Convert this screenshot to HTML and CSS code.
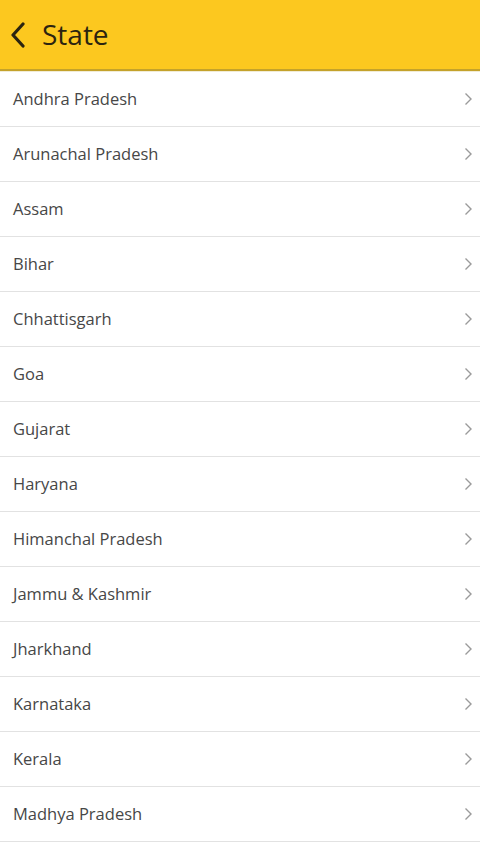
FILE: index.html
```html
<!DOCTYPE html>
<html lang="en">
<head>
<meta charset="utf-8">
<title>State</title>
<link rel="stylesheet" href="styles.css">
</head>
<body>
<header class="appbar">
  <button class="back" aria-label="Back">
    <svg width="18" height="26" viewBox="0 0 18 26"><path d="M14 2 L4 13 L14 24" fill="none" stroke="#2b2410" stroke-width="3.2" stroke-linecap="round" stroke-linejoin="round"/></svg>
  </button>
  <h1 class="title">State</h1>
</header>
<ul class="list">
  <li class="item"><span class="name">Andhra Pradesh</span><svg class="chev" width="9" height="14" viewBox="0 0 9 14"><path d="M1.5 1.5 L7 7 L1.5 12.5" fill="none" stroke="#9a9a9a" stroke-width="1.4"/></svg></li>
  <li class="item"><span class="name">Arunachal Pradesh</span><svg class="chev" width="9" height="14" viewBox="0 0 9 14"><path d="M1.5 1.5 L7 7 L1.5 12.5" fill="none" stroke="#9a9a9a" stroke-width="1.4"/></svg></li>
  <li class="item"><span class="name">Assam</span><svg class="chev" width="9" height="14" viewBox="0 0 9 14"><path d="M1.5 1.5 L7 7 L1.5 12.5" fill="none" stroke="#9a9a9a" stroke-width="1.4"/></svg></li>
  <li class="item"><span class="name">Bihar</span><svg class="chev" width="9" height="14" viewBox="0 0 9 14"><path d="M1.5 1.5 L7 7 L1.5 12.5" fill="none" stroke="#9a9a9a" stroke-width="1.4"/></svg></li>
  <li class="item"><span class="name">Chhattisgarh</span><svg class="chev" width="9" height="14" viewBox="0 0 9 14"><path d="M1.5 1.5 L7 7 L1.5 12.5" fill="none" stroke="#9a9a9a" stroke-width="1.4"/></svg></li>
  <li class="item"><span class="name">Goa</span><svg class="chev" width="9" height="14" viewBox="0 0 9 14"><path d="M1.5 1.5 L7 7 L1.5 12.5" fill="none" stroke="#9a9a9a" stroke-width="1.4"/></svg></li>
  <li class="item"><span class="name">Gujarat</span><svg class="chev" width="9" height="14" viewBox="0 0 9 14"><path d="M1.5 1.5 L7 7 L1.5 12.5" fill="none" stroke="#9a9a9a" stroke-width="1.4"/></svg></li>
  <li class="item"><span class="name">Haryana</span><svg class="chev" width="9" height="14" viewBox="0 0 9 14"><path d="M1.5 1.5 L7 7 L1.5 12.5" fill="none" stroke="#9a9a9a" stroke-width="1.4"/></svg></li>
  <li class="item"><span class="name">Himanchal Pradesh</span><svg class="chev" width="9" height="14" viewBox="0 0 9 14"><path d="M1.5 1.5 L7 7 L1.5 12.5" fill="none" stroke="#9a9a9a" stroke-width="1.4"/></svg></li>
  <li class="item"><span class="name">Jammu &amp; Kashmir</span><svg class="chev" width="9" height="14" viewBox="0 0 9 14"><path d="M1.5 1.5 L7 7 L1.5 12.5" fill="none" stroke="#9a9a9a" stroke-width="1.4"/></svg></li>
  <li class="item"><span class="name">Jharkhand</span><svg class="chev" width="9" height="14" viewBox="0 0 9 14"><path d="M1.5 1.5 L7 7 L1.5 12.5" fill="none" stroke="#9a9a9a" stroke-width="1.4"/></svg></li>
  <li class="item"><span class="name">Karnataka</span><svg class="chev" width="9" height="14" viewBox="0 0 9 14"><path d="M1.5 1.5 L7 7 L1.5 12.5" fill="none" stroke="#9a9a9a" stroke-width="1.4"/></svg></li>
  <li class="item"><span class="name">Kerala</span><svg class="chev" width="9" height="14" viewBox="0 0 9 14"><path d="M1.5 1.5 L7 7 L1.5 12.5" fill="none" stroke="#9a9a9a" stroke-width="1.4"/></svg></li>
  <li class="item"><span class="name">Madhya Pradesh</span><svg class="chev" width="9" height="14" viewBox="0 0 9 14"><path d="M1.5 1.5 L7 7 L1.5 12.5" fill="none" stroke="#9a9a9a" stroke-width="1.4"/></svg></li>
</ul>
</body>
</html>
```
FILE: styles.css
```css
html, body {
  margin: 0;
  padding: 0;
  background: #ffffff;
  font-family: "Open Sans", "Noto Sans", sans-serif;
  overflow: hidden;
}
body {
  height: 854px;
}
.appbar {
  height: 69px;
  background: #fcc81f;
  border-bottom: 2px solid #c4a22a;
  display: flex;
  align-items: center;
  padding: 0 0 0 9px;
  box-sizing: content-box;
}
.back {
  background: none;
  border: 0;
  padding: 0;
  margin: 0;
  width: 18px;
  height: 26px;
  display: flex;
  margin-top: 1px;
}
.title {
  margin: 0 0 0 15px;
  font-size: 28px;
  font-weight: 400;
  color: #2b2410;
  line-height: 1;
  padding-bottom: 1px;
}
.list {
  list-style: none;
  margin: 0;
  padding: 0;
  background: #fff;
  border-top: 1px solid #f1ecd6;
}
.item {
  height: 54px;
  border-bottom: 1px solid #e2e2e2;
  display: flex;
  align-items: center;
  justify-content: space-between;
  padding: 0 7px 0 13px;
}
.name {
  font-size: 16.5px;
  color: #474747;
  line-height: 1;
}
.chev {
  display: block;
}
```
